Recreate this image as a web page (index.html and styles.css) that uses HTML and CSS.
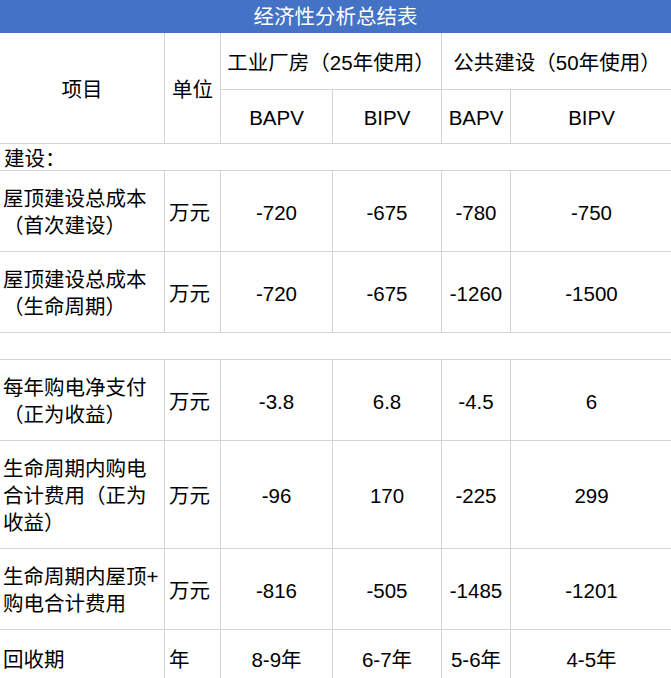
FILE: index.html
```html
<!DOCTYPE html>
<html lang="zh-CN">
<head>
<meta charset="utf-8">
<title>经济性分析总结表</title>
<link rel="stylesheet" href="styles.css">
</head>
<body>
<div class="sheet">
  <div class="title">经济性分析总结表</div>
  <div class="grid">
    <div class="cell center span-r2">项目</div>
    <div class="cell center span-r2">单位</div>
    <div class="cell center span-c2">工业厂房（25年使用）</div>
    <div class="cell center span-c2">公共建设（50年使用）</div>
    <div class="cell center">BAPV</div>
    <div class="cell center">BIPV</div>
    <div class="cell center">BAPV</div>
    <div class="cell center">BIPV</div>

    <div class="cell left full section">建设：</div>

    <div class="cell left item">屋顶建设总成本<br>（首次建设）</div>
    <div class="cell left unit">万元</div>
    <div class="cell center">-720</div>
    <div class="cell center">-675</div>
    <div class="cell center">-780</div>
    <div class="cell center">-750</div>

    <div class="cell left item">屋顶建设总成本<br>（生命周期）</div>
    <div class="cell left unit">万元</div>
    <div class="cell center">-720</div>
    <div class="cell center">-675</div>
    <div class="cell center">-1260</div>
    <div class="cell center">-1500</div>

    <div class="cell full blank"></div>

    <div class="cell left item">每年购电净支付<br>（正为收益）</div>
    <div class="cell left unit">万元</div>
    <div class="cell center">-3.8</div>
    <div class="cell center">6.8</div>
    <div class="cell center">-4.5</div>
    <div class="cell center">6</div>

    <div class="cell left item">生命周期内购电<br>合计费用（正为<br>收益）</div>
    <div class="cell left unit">万元</div>
    <div class="cell center">-96</div>
    <div class="cell center">170</div>
    <div class="cell center">-225</div>
    <div class="cell center">299</div>

    <div class="cell left item">生命周期内屋顶+<br>购电合计费用</div>
    <div class="cell left unit">万元</div>
    <div class="cell center">-816</div>
    <div class="cell center">-505</div>
    <div class="cell center">-1485</div>
    <div class="cell center">-1201</div>

    <div class="cell left item">回收期</div>
    <div class="cell left unit">年</div>
    <div class="cell center">8-9年</div>
    <div class="cell center">6-7年</div>
    <div class="cell center">5-6年</div>
    <div class="cell center">4-5年</div>
  </div>
</div>
</body>
</html>
```

FILE: styles.css
```css
html, body {
  margin: 0;
  padding: 0;
  background: #ffffff;
  overflow: hidden;
}

.sheet {
  width: 671px;
  font-family: "Liberation Sans", "Noto Sans CJK SC", sans-serif;
  font-size: 20.5px;
  line-height: 27px;
  color: #000000;
}

.title {
  height: 33px;
  box-sizing: border-box;
  padding-top: 1px;
  background: #4472c4;
  color: #ffffff;
  text-align: center;
  line-height: 32px;
}

.grid {
  display: grid;
  grid-template-columns: 164px 55px 111px 108px 68px 161px;
  grid-template-rows: 56px 53px 26px 80px 80px 26px 80px 107px 80px 57px;
  gap: 1px;
  background: #d4d4d4;
  width: 672px;
}

.cell {
  background: #ffffff;
  display: flex;
  align-items: center;
  box-sizing: border-box;
  padding-top: 2px;
  white-space: nowrap;
  overflow: hidden;
}

.center {
  justify-content: center;
  text-align: center;
}

.left {
  justify-content: flex-start;
  text-align: left;
}

.item {
  padding-left: 3px;
}

.unit {
  padding-left: 4px;
}

.section {
  padding-left: 4px;
}

.span-r2 {
  grid-row: span 2;
}

.span-c2 {
  grid-column: span 2;
}

.full {
  grid-column: 1 / -1;
}
```
